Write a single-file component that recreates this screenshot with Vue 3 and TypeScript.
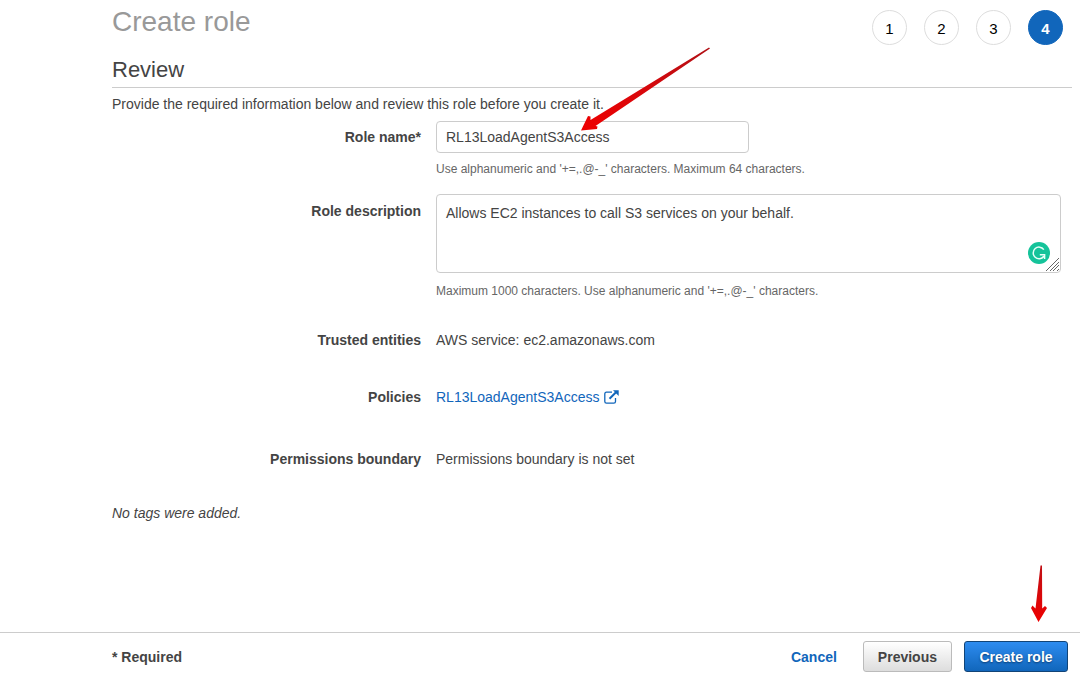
<script setup lang="ts">
import { ref } from 'vue'

const steps: number[] = [1, 2, 3, 4]
const currentStep = 4

const roleName = ref('RL13LoadAgentS3Access')
const description = ref('Allows EC2 instances to call S3 services on your behalf.')
</script>

<template>
  <div class="page">
    <main class="content">
      <header class="top">
        <h1>Create role</h1>
        <ol class="steps">
          <li v-for="step in steps" :key="step" :class="{ active: step === currentStep }">{{ step }}</li>
        </ol>
      </header>
      <h2>Review</h2>
      <p class="intro">Provide the required information below and review this role before you create it.</p>

      <form class="form" @submit.prevent>
        <div class="row row-name">
          <label class="label" for="role-name">Role name*</label>
          <div class="value">
            <div class="name-box">
              <input id="role-name" v-model="roleName" type="text" spellcheck="false" />
              <svg class="arrow-name" viewBox="0 0 132 86" aria-hidden="true">
                <defs>
                  <linearGradient id="shaft" x1="1" y1="0" x2="0" y2="1">
                    <stop offset="0" stop-color="#b01015" />
                    <stop offset=".5" stop-color="#d8080c" />
                    <stop offset="1" stop-color="#ee0000" />
                  </linearGradient>
                </defs>
                <path d="M128 0.500 L129 1.500 L14.500 79 L16.500 79.500 L16 82 L0 83.500 L7 69 L9.500 69.500 L9.500 73 Z" fill="url(#shaft)" />
              </svg>
            </div>
            <p class="hint">Use alphanumeric and '+=,.@-_' characters. Maximum 64 characters.</p>
          </div>
        </div>

        <div class="row row-description">
          <label class="label" for="role-description">Role description</label>
          <div class="value">
            <div class="description-box">
              <textarea id="role-description" v-model="description" spellcheck="false"></textarea>
              <svg class="checker" viewBox="0 0 22 22" aria-hidden="true">
                <circle cx="11" cy="11" r="11" fill="#15c39a" />
                <path d="M15.800 7.600 A5.800 5.800 0 1 0 15.800 14.200 M11.800 12.800 H16.600 V17" fill="none" stroke="#e8fff8" stroke-width="1.500" />
              </svg>
              <svg class="grip" viewBox="0 0 14 14" aria-hidden="true">
                <path d="M0 13 L13 0 M4 13 L13 4 M7 13 L13 7 M11 13 L13 11" stroke="#666" stroke-width="1" />
              </svg>
            </div>
            <p class="hint hint-description">Maximum 1000 characters. Use alphanumeric and '+=,.@-_' characters.</p>
          </div>
        </div>

        <div class="row row-trusted">
          <span class="label">Trusted entities</span>
          <span class="value">AWS service: ec2.amazonaws.com</span>
        </div>
        <div class="row row-policies">
          <span class="label">Policies</span>
          <span class="value">
            <a href="#" class="policy">RL13LoadAgentS3Access
              <svg viewBox="0 0 15 14" aria-hidden="true">
                <path d="M8 2.200 H2.500 Q.8 2.200 .8 4 V11.500 Q.8 13.200 2.500 13.200 H9.800 Q11.500 13.200 11.500 11.500 V8" fill="none" stroke="#1166bb" stroke-width="1.300" />
                <path d="M5.500 8.700 L12 2.200" stroke="#1166bb" stroke-width="2" />
                <path d="M9 .3 H14.700 V6 Z" fill="#1166bb" />
              </svg>
            </a>
          </span>
        </div>
        <div class="row row-boundary">
          <span class="label">Permissions boundary</span>
          <span class="value">Permissions boundary is not set</span>
        </div>
      </form>

      <p class="tags">No tags were added.</p>
    </main>

    <footer class="footer">
      <strong>* Required</strong>
      <div class="actions">
        <button type="button" class="cancel">Cancel</button>
        <button type="button" class="btn previous">Previous</button>
        <div class="create-box">
          <button type="button" class="btn create">Create role</button>
          <svg class="arrow-create" viewBox="0 0 18 57" aria-hidden="true">
            <defs>
              <linearGradient id="drop" x1="0" y1="0" x2="0" y2="1">
                <stop offset="0" stop-color="#c01015" />
                <stop offset="1" stop-color="#ee0000" />
              </linearGradient>
            </defs>
            <path d="M10.500 0.500 H12 L12.200 43.500 L15 41 L17 43 L8.500 57 L1 43 L2.500 40.500 L5.500 43.500 Z" fill="url(#drop)" />
          </svg>
        </div>
      </div>
    </footer>
  </div>
</template>

<style>
body {
  margin: 0;
  background: #fff;
}
</style>

<style scoped>
.page,
.page * {
  box-sizing: border-box;
}
.page {
  display: flex;
  flex-direction: column;
  min-height: 100vh;
  color: #444;
  font: 14px/20px "Liberation Sans", Arial, sans-serif;
}
.content {
  flex: 1;
  padding: 0 8px 0 112px;
}
.top {
  display: flex;
  justify-content: space-between;
  padding-right: 9px;
}
h1,
h2,
p {
  margin: 0;
  font-weight: normal;
}
h1 {
  color: #999;
  font-size: 28px;
  line-height: 44px;
}
.steps {
  display: flex;
  gap: 17px;
  margin: 0;
  padding: 10px 0 0;
  list-style: none;
}
.steps li {
  width: 35px;
  height: 35px;
  padding-top: 1px;
  border: 1px solid #ddd;
  border-radius: 50%;
  color: #000;
  font-size: 15px;
  line-height: 33px;
  text-align: center;
}
.steps .active {
  border-color: #1166bb;
  background: #1166bb;
  color: #fff;
  font-weight: bold;
}
h2 {
  margin-top: 13px;
  padding-bottom: 5px;
  border-bottom: 1px solid #ccc;
  font-size: 22px;
  line-height: 24px;
}
.intro {
  padding: 6px 0 7px;
}
.row {
  display: grid;
  grid-template-columns: 309px 1fr;
  column-gap: 15px;
}
.label {
  font-weight: bold;
  text-align: right;
}
.row-name .label {
  padding-top: 6px;
}
.row-description .label {
  padding-top: 7px;
}
.name-box {
  position: relative;
  max-width: 313px;
}
input,
textarea {
  display: block;
  width: 100%;
  border: 1px solid #ccc;
  border-radius: 4px;
  outline: none;
  background: #fff;
  color: #444;
  font: inherit;
}
input {
  height: 32px;
  padding: 0 9px;
}
.arrow-name {
  position: absolute;
  top: -74px;
  left: 145px;
  width: 132px;
  height: 86px;
  pointer-events: none;
}
.hint {
  padding-top: 6px;
  color: #666;
  font-size: 12px;
}
.hint-description {
  padding-top: 8px;
}
.row-description {
  margin-top: 15px;
}
.description-box {
  position: relative;
  margin-right: 11px;
}
textarea {
  height: 79px;
  padding: 8px 9px;
  resize: none;
}
.checker {
  position: absolute;
  right: 11px;
  bottom: 9px;
  width: 22px;
  height: 22px;
}
.grip {
  position: absolute;
  right: 1px;
  bottom: 1px;
  width: 14px;
  height: 14px;
}
.row-trusted {
  margin-top: 29px;
}
.row-policies {
  margin-top: 37px;
}
.row-boundary {
  margin-top: 42px;
}
.policy {
  display: inline-flex;
  align-items: center;
  gap: 5px;
  color: #1166bb;
  text-decoration: none;
}
.policy svg {
  width: 15px;
  height: 14px;
}
.tags {
  margin-top: 34px;
  font-style: italic;
}
.footer {
  display: flex;
  align-items: center;
  justify-content: space-between;
  padding: 8px 12px 6px 112px;
  border-top: 1px solid #ccc;
}
.actions {
  display: flex;
  align-items: center;
  gap: 12px;
}
button {
  margin: 0;
  font: inherit;
  font-weight: bold;
  cursor: pointer;
}
.cancel {
  margin-right: 14px;
  padding: 0;
  border: 0;
  background: none;
  color: #1166bb;
}
.btn {
  display: block;
  height: 31px;
  padding: 0 14px;
  border: 1px solid #bbb;
  border-radius: 3px;
}
.previous {
  min-width: 88px;
  background: linear-gradient(#fff, #ddd);
  color: #444;
}
.create {
  min-width: 104px;
  border-color: #114477;
  background: linear-gradient(#2d8cf0, #1166bb);
  color: #fff;
  text-shadow: 0 1px 2px #0a3b70;
}
.create-box {
  position: relative;
}
.arrow-create {
  position: absolute;
  top: -76px;
  left: 66px;
  width: 18px;
  height: 57px;
  pointer-events: none;
}
</style>
